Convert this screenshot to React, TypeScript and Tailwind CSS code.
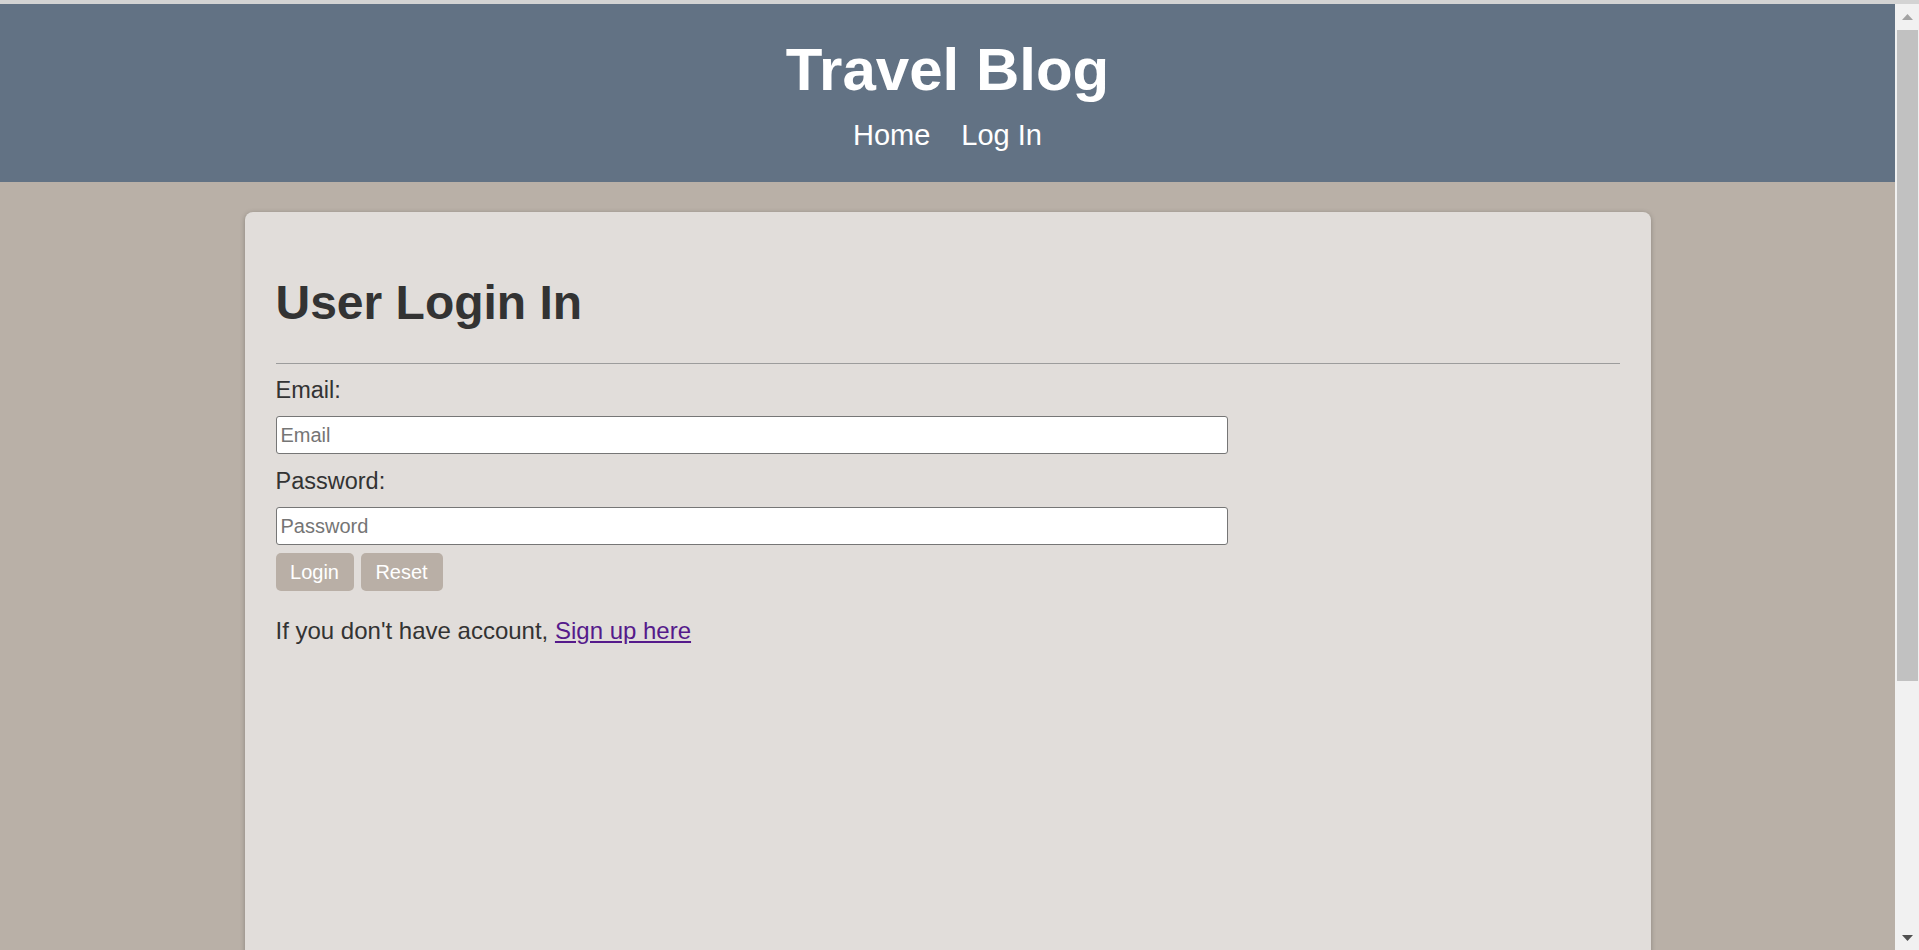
import React from "react";

export default function App() {
  return (
    <div
      className="h-[950px] w-full overflow-hidden flex flex-col bg-[#b9b0a7]"
      style={{ fontFamily: '"Liberation Sans", Arial, Helvetica, sans-serif' }}
    >
      <div className="h-[4px] w-full bg-[#d3d3d3] shrink-0" />
      <div className="flex flex-1 min-h-0">
        <div className="flex-1 min-w-0 flex flex-col">
          <header className="bg-[#627284] pt-[36px] pb-[33px] flex flex-col items-center text-white shrink-0">
            <h1 className="text-[60px] leading-[60px] font-bold">Travel Blog</h1>
            <nav className="mt-[21px] flex gap-[31px] text-[29px] leading-[28px]">
              <a className="text-white">Home</a>
              <a className="text-white">Log In</a>
            </nav>
          </header>
          <div className="flex justify-center pt-[30px]">
            <div className="w-[1406px] h-[1100px] bg-[#e1dddA] rounded-[8px] shadow-[0_1px_5px_rgba(0,0,0,0.25)] px-[31px] pt-[31px] text-[#333333]">
              <h2 className="mt-[36px] text-[48px] leading-[48px] font-bold text-[#333333]">
                User Login In
              </h2>
              <div className="mt-[36px] h-px bg-[#9c9c9c]" />
              <form className="flex flex-col" onSubmit={(e) => e.preventDefault()}>
                <label className="mt-[13px] text-[23.5px] leading-[26px]">Email:</label>
                <input
                  type="email"
                  placeholder="Email"
                  className="mt-[13px] w-[952px] h-[38px] bg-white border border-[#767676] rounded-[3px] pl-[4px] text-[20px] text-[#333] placeholder:text-[#757575] outline-none"
                />
                <label className="mt-[14px] text-[23.5px] leading-[26px]">Password:</label>
                <input
                  type="password"
                  placeholder="Password"
                  className="mt-[13px] w-[952px] h-[38px] bg-white border border-[#767676] rounded-[3px] pl-[4px] text-[20px] text-[#333] placeholder:text-[#757575] outline-none"
                />
                <div className="mt-[8px] flex gap-[7px]">
                  <button
                    type="submit"
                    className="h-[38px] w-[78px] bg-[#b9afa6] text-white text-[20px] rounded-[5px]"
                  >
                    Login
                  </button>
                  <button
                    type="reset"
                    className="h-[38px] w-[82px] bg-[#b9afa6] text-white text-[20px] rounded-[5px]"
                  >
                    Reset
                  </button>
                </div>
              </form>
              <p className="mt-[27px] text-[24px] leading-[26px]">
                If you don't have account,{" "}
                <a className="text-[#551a8b] underline">Sign up here</a>
              </p>
            </div>
          </div>
        </div>
        <div className="w-[24px] shrink-0 bg-[#f1f1f1] flex flex-col">
          <div className="h-[26px] flex items-center justify-center">
            <svg width="11" height="6" viewBox="0 0 11 6">
              <polygon points="5.5,0 11,6 0,6" fill="#a3a3a3" />
            </svg>
          </div>
          <div className="h-[651px] ml-[2px] mr-[1px] bg-[#c1c1c1]" />
          <div className="flex-1" />
          <div className="h-[20px] flex items-start justify-center pt-[5px]">
            <svg width="11" height="6" viewBox="0 0 11 6">
              <polygon points="0,0 11,0 5.5,6" fill="#505050" />
            </svg>
          </div>
        </div>
      </div>
    </div>
  );
}
